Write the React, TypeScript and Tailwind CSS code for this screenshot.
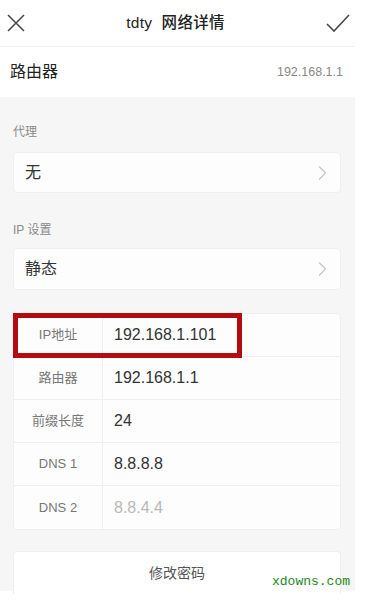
// Tela de detalhes da rede Wi-Fi — réplica estática
const font = { fontFamily: '"Liberation Sans", "Noto Sans CJK SC", sans-serif' };

const rows = [
  { label: "IP地址", value: "192.168.1.101" },
  { label: "路由器", value: "192.168.1.1" },
  { label: "前缀长度", value: "24" },
  { label: "DNS 1", value: "8.8.8.8" },
  { label: "DNS 2", value: "8.8.4.4", muted: true },
];

function Chevron() {
  return (
    <svg width="10" height="16" viewBox="0 0 10 16" fill="none">
      <path d="M2 1.5 L8.5 8 L2 14.5" stroke="#c4c4c4" strokeWidth="1.2" />
    </svg>
  );
}

export default function App() {
  return (
    <div className="relative flex w-[365px] h-[600px] bg-white overflow-hidden" style={font}>
      <div className="w-[355px] h-[591px] flex flex-col bg-[#f6f6f6]">
        {/* Cabeçalho */}
        <div className="h-[47px] shrink-0 flex items-center justify-between bg-white border-b border-[#f0f0f0] pl-[7px] pr-[5px]">
          <svg width="18" height="18" viewBox="0 0 18 18" fill="none">
            <path d="M1 1 L17 17 M17 1 L1 17" stroke="#4a4a4a" strokeWidth="1.6" />
          </svg>
          <div className="text-[15.5px] font-medium text-[#222] tracking-[0.3px]">tdty&nbsp; 网络详情</div>
          <svg width="24" height="20" viewBox="0 0 24 20" fill="none">
            <path d="M1 11 L8 18 L23 2" stroke="#4a4a4a" strokeWidth="1.6" />
          </svg>
        </div>

        {/* Roteador */}
        <div className="h-[50px] shrink-0 flex items-center justify-between bg-white px-[10px]">
          <span className="text-[16px] text-[#222]">路由器</span>
          <span className="text-[12.5px] text-[#888] pr-[2px]">192.168.1.1</span>
        </div>

        <div className="flex-1 flex flex-col pl-[13px] pr-[14px]">
          <div className="mt-[27px] text-[12px] leading-[16px] text-[#8a8a8a]">代理</div>
          <div className="mt-[12px] h-[41px] flex items-center justify-between rounded-[4px] bg-[#fdfdfd] border border-[#efefef] pl-[11px] pr-[13px]">
            <span className="text-[16px] text-[#333]">无</span>
            <Chevron />
          </div>

          <div className="mt-[29px] text-[12px] leading-[16px] text-[#8a8a8a]">IP 设置</div>
          <div className="mt-[10px] h-[42px] flex items-center justify-between rounded-[4px] bg-[#fdfdfd] border border-[#efefef] pl-[11px] pr-[13px]">
            <span className="text-[16px] text-[#333]">静态</span>
            <Chevron />
          </div>

          {/* Tabela de IP */}
          <div className="relative mt-[23px] rounded-[4px] bg-[#fdfdfd] border border-[#efefef]">
            {rows.map((r, i) => (
              <div
                key={r.label}
                className={`h-[43px] flex ${i < rows.length - 1 ? "border-b border-[#efefef]" : ""}`}
              >
                <div className="w-[89px] shrink-0 flex items-center justify-center border-r border-[#eeeeee] text-[13px] text-[#777]">
                  {r.label}
                </div>
                <div
                  className={`flex items-center pl-[11px] text-[16px] ${r.muted ? "text-[#b8b8b8]" : "text-[#333]"}`}
                >
                  {r.value}
                </div>
              </div>
            ))}
            <div className="absolute left-[-1px] top-[-1px] w-[229px] h-[45px] border-[5px] border-[#b30b10]" />
          </div>

          <div className="mt-[21px] h-[43px] flex items-center justify-center rounded-t-[4px] bg-white border border-[#efefef] border-b-0 text-[14px] text-[#555]">
            修改密码
          </div>
        </div>
      </div>

      {/* Marca d'água */}
      <div
        className="absolute left-[272px] top-[574px] text-[13px] leading-[16px] text-[#1a8a1a]"
        style={{ fontFamily: '"Liberation Mono", monospace' }}
      >
        xdowns.com
      </div>
    </div>
  );
}
